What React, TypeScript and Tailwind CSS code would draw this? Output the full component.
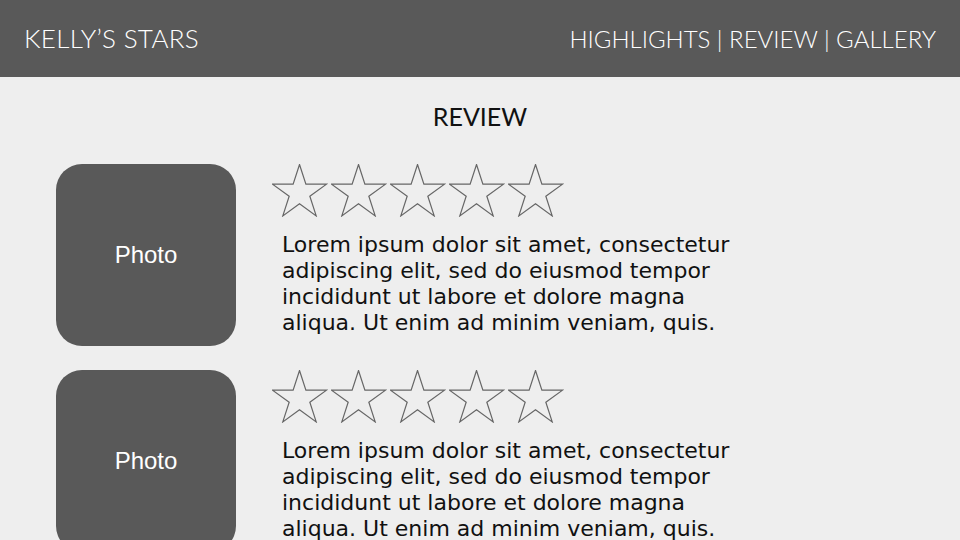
import React from "react";

function Star() {
  const R = 28.4;
  const r = R * 0.382;
  const cx = 28.4 * 0.951 + 0.5;
  const cy = R + 0.5;
  const pts: string[] = [];
  for (let i = 0; i < 10; i++) {
    const rad = i % 2 === 0 ? R : r;
    const a = (Math.PI / 5) * i - Math.PI / 2;
    pts.push(`${(cx + rad * Math.cos(a)).toFixed(2)},${(cy + rad * Math.sin(a)).toFixed(2)}`);
  }
  return (
    <svg width="56" height="53" viewBox="0 0 56 53" className="block shrink-0">
      <polygon points={pts.join(" ")} fill="none" stroke="#666666" strokeWidth="1.2" strokeLinejoin="miter" />
    </svg>
  );
}

function ReviewRow() {
  return (
    <div className="flex">
      <div className="w-[180px] h-[182px] shrink-0 rounded-[26px] bg-[#595959] flex items-center justify-center">
        <span className="text-white text-[24px]" style={{ fontFamily: '"Liberation Sans", Arial, sans-serif' }}>Photo</span>
      </div>
      <div className="ml-[36px] flex flex-col">
        <div className="flex gap-[3px]">
          <Star />
          <Star />
          <Star />
          <Star />
          <Star />
        </div>
        <p
          className="ml-[10px] mt-[15px] text-[22px] leading-[26px] text-[#111111] w-[480px]"
          style={{ fontFamily: '"DejaVu Sans", sans-serif' }}
        >
          Lorem ipsum dolor sit amet, consectetur
          <br />
          adipiscing elit, sed do eiusmod tempor
          <br />
          incididunt ut labore et dolore magna
          <br />
          aliqua. Ut enim ad minim veniam, quis.
        </p>
      </div>
    </div>
  );
}

export default function App() {
  return (
    <div className="w-[960px] h-[540px] overflow-hidden bg-[#eeeeee]" style={{ fontFamily: 'Lato, sans-serif' }}>
      <header className="h-[77px] bg-[#595959] flex items-center justify-between pl-[24px] pr-[24px] text-white font-light">
        <div className="text-[26px] tracking-[0.3px]">KELLY’S STARS</div>
        <div className="text-[24px]">HIGHLIGHTS | REVIEW | GALLERY</div>
      </header>
      <div className="pt-[24px] text-center text-[25px] text-[#111111] leading-[30px]">REVIEW</div>
      <div className="pl-[56px] pt-[33px] flex flex-col gap-[24px]">
        <ReviewRow />
        <ReviewRow />
      </div>
    </div>
  );
}
